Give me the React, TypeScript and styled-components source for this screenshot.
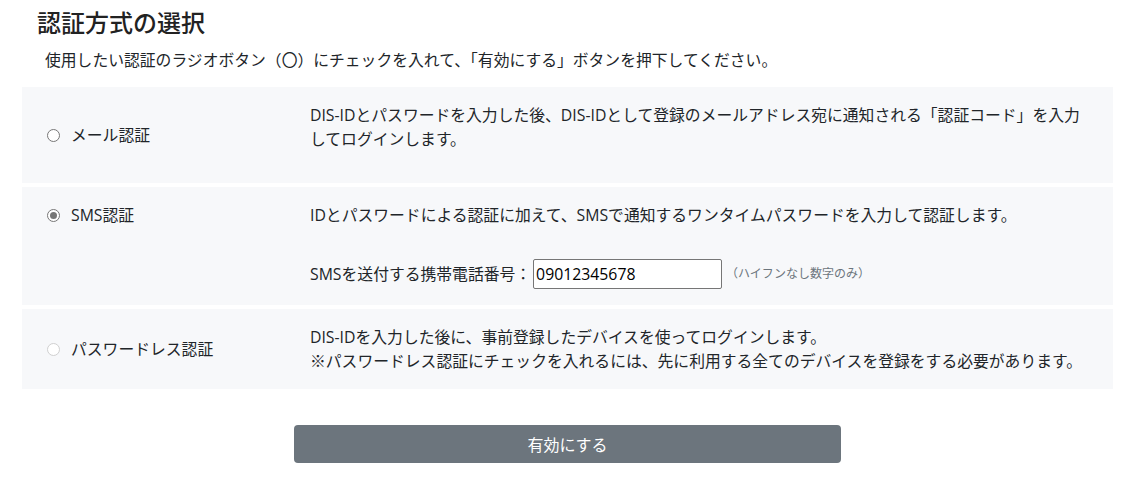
import React, { useState } from 'react'
import styled, { createGlobalStyle } from 'styled-components'

const GlobalStyle = createGlobalStyle`
  body {
    margin: 0;
    background: #fff;
    color: #212529;
    font-family: "Open Sans", "Noto Sans CJK JP", sans-serif;
  }
`

const Page = styled.div`
  padding: 8px 23px 0 22px;
`

const Title = styled.h2`
  margin: 0 0 11px 15px;
  font-size: 24px;
  line-height: 29px;
  font-weight: 500;
  color: #222;
`

const Lead = styled.p`
  margin: 0 0 15px 23px;
  font-size: 15.8px;
  line-height: 24px;
`

const MethodList = styled.div`
  display: flex;
  flex-direction: column;
  gap: 4px;
`

interface PanelProps {
  $top?: boolean
}

const Panel = styled.div<PanelProps>`
  display: grid;
  grid-template-columns: 263px 1fr;
  align-items: ${(p) => (p.$top ? 'start' : 'center')};
  background: #f7f8fa;
  padding: 16px 21px 16px 25px;
`

const Label = styled.label`
  display: flex;
  align-items: center;
  gap: 11px;
  font-size: 15.8px;
  line-height: 24px;
  cursor: pointer;
`

interface RadioProps {
  $checked?: boolean
  $disabled?: boolean
}

const Radio = styled.span<RadioProps>`
  box-sizing: border-box;
  width: 13px;
  height: 13px;
  border-radius: 50%;
  border: 1px solid ${(p) => (p.$disabled ? '#d0d0d0' : '#777')};
  background: #fff;
  display: flex;
  align-items: center;
  justify-content: center;
  flex-shrink: 0;
  &::after {
    content: '';
    display: ${(p) => (p.$checked ? 'block' : 'none')};
    width: 7px;
    height: 7px;
    border-radius: 50%;
    background: #777;
  }
`

const Desc = styled.div`
  font-size: 15.8px;
  line-height: 24px;
`

interface TextProps {
  $last?: boolean
}

const Text = styled.p<TextProps>`
  margin: 0 0 ${(p) => (p.$last ? '0' : '16px')};
`

const PhoneRow = styled.div`
  display: flex;
  align-items: center;
  margin-top: 32px;
`

const PhoneInput = styled.input`
  box-sizing: border-box;
  width: 189px;
  height: 30px;
  margin-left: 2px;
  padding: 1px 2px;
  border: 1px solid #767676;
  border-radius: 2px;
  font-family: "Open Sans", sans-serif;
  font-size: 15.8px;
  color: #000;
  background: #fff;
`

const Hint = styled.span`
  margin-left: 4px;
  font-size: 12px;
  color: #6c757d;
`

const ButtonRow = styled.div`
  display: flex;
  justify-content: center;
  margin-top: 36px;
`

const SubmitButton = styled.button`
  width: calc(50% + 2px);
  height: 38px;
  border: none;
  border-radius: 4px;
  background: #6c757d;
  color: #fff;
  font-family: "Open Sans", "Noto Sans CJK JP", sans-serif;
  font-size: 16px;
  cursor: pointer;
`

type Method = 'mail' | 'sms' | 'passwordless'

export default function App() {
  const [method, setMethod] = useState<Method>('sms')
  const [phone, setPhone] = useState('09012345678')

  return (
    <Page>
      <GlobalStyle />
      <Title>認証方式の選択</Title>
      <Lead>
        使用したい認証のラジオボタン（〇）にチェックを入れて、「有効にする」ボタンを押下してください。
      </Lead>
      <MethodList>
        <Panel>
          <Label onClick={() => setMethod('mail')}>
            <Radio $checked={method === 'mail'} />
            メール認証
          </Label>
          <Desc>
            <Text>
              DIS-IDとパスワードを入力した後、DIS-IDとして登録のメールアドレス宛に通知される「認証コード」を入力してログインします。
            </Text>
          </Desc>
        </Panel>
        <Panel $top>
          <Label onClick={() => setMethod('sms')}>
            <Radio $checked={method === 'sms'} />
            SMS認証
          </Label>
          <Desc>
            <Text $last>
              IDとパスワードによる認証に加えて、SMSで通知するワンタイムパスワードを入力して認証します。
            </Text>
            <PhoneRow>
              SMSを送付する携帯電話番号：
              <PhoneInput
                value={phone}
                onChange={(e) => setPhone(e.target.value)}
              />
              <Hint>（ハイフンなし数字のみ）</Hint>
            </PhoneRow>
          </Desc>
        </Panel>
        <Panel>
          <Label>
            <Radio $disabled />
            パスワードレス認証
          </Label>
          <Desc>
            <Text $last>
              DIS-IDを入力した後に、事前登録したデバイスを使ってログインします。
              <br />
              ※パスワードレス認証にチェックを入れるには、先に利用する全てのデバイスを登録をする必要があります。
            </Text>
          </Desc>
        </Panel>
      </MethodList>
      <ButtonRow>
        <SubmitButton>有効にする</SubmitButton>
      </ButtonRow>
    </Page>
  )
}
